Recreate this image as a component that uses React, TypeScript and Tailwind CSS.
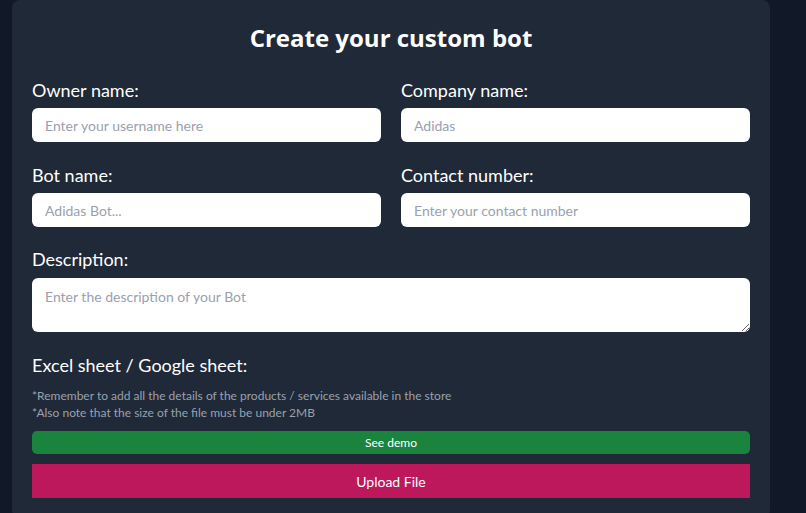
import React from "react";

function Field({ label, placeholder }: { label: string; placeholder: string }) {
  return (
    <div className="flex flex-col">
      <label className="text-[18px] leading-[28px] text-white mb-[4px]">{label}</label>
      <input
        className="h-[34px] w-full rounded-md bg-white px-[13px] text-[14px] text-gray-900 placeholder:text-gray-400 outline-none"
        placeholder={placeholder}
      />
    </div>
  );
}

export default function App() {
  return (
    <div className="min-h-screen bg-[#111827] pl-[12px] pr-[36px] font-['Lato',sans-serif]">
      <div className="w-[758px] rounded-lg bg-[#1f2937] px-[20px] pt-[22px] pb-[20px]">
        <h1 className="text-center text-[24px] leading-[32px] font-bold text-white mb-[22px] font-['Open_Sans',sans-serif]">
          Create your custom bot
        </h1>
        <div className="grid grid-cols-2 gap-x-[20px] gap-y-[19px]">
          <Field label="Owner name:" placeholder="Enter your username here" />
          <Field label="Company name:" placeholder="Adidas" />
          <Field label="Bot name:" placeholder="Adidas Bot..." />
          <Field label="Contact number:" placeholder="Enter your contact number" />
        </div>
        <div className="mt-[18px] flex flex-col">
          <label className="text-[18px] leading-[28px] text-white mb-[5px]">Description:</label>
          <textarea
            className="h-[54px] w-full rounded-md bg-white px-[13px] py-[8px] text-[14px] text-gray-900 placeholder:text-gray-400 outline-none"
            placeholder="Enter the description of your Bot"
          />
        </div>
        <div className="mt-[19px] flex flex-col">
          <label className="text-[18px] leading-[28px] text-white">Excel sheet / Google sheet:</label>
          <p className="mt-[8px] text-[12px] leading-[17px] text-gray-400">
            *Remember to add all the details of the products / services available in the store
            <br />
            *Also note that the size of the file must be under 2MB
          </p>
          <button className="mt-[10px] h-[23px] w-full rounded-[5px] bg-[#1a833d] text-[12px] text-white">
            See demo
          </button>
          <button className="mt-[10px] h-[34px] w-full bg-[#be185d] text-[14px] text-white">
            Upload File
          </button>
        </div>
      </div>
    </div>
  );
}
